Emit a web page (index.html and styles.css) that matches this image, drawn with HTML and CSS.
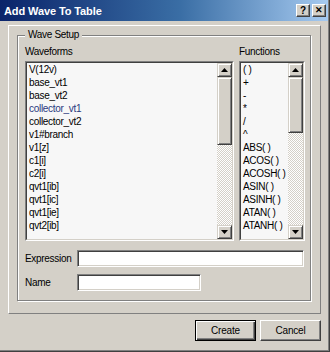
FILE: index.html
```html
<!DOCTYPE html>
<html>
<head>
<meta charset="utf-8">
<link rel="stylesheet" href="styles.css">
</head>
<body>
<div class="window">
  <div class="titlebar">
    <span class="title">Add Wave To Table</span>
    <div class="tbtns"><span class="tbtn">?</span><span class="tbtn x">✕</span></div>
  </div>
  <div class="panel">
    <div class="group">
      <span class="legend">Wave Setup</span>
      <div class="lists">
        <div class="lbl">Waveforms</div>
        <div class="lbl">Functions</div>
        <div class="listbox">
          <div class="lb-inner">
            <ul class="items">
              <li>V(12v)</li>
              <li>base_vt1</li>
              <li>base_vt2</li>
              <li class="sel">collector_vt1</li>
              <li>collector_vt2</li>
              <li>v1#branch</li>
              <li>v1[z]</li>
              <li>c1[i]</li>
              <li>c2[i]</li>
              <li>qvt1[ib]</li>
              <li>qvt1[ic]</li>
              <li>qvt1[ie]</li>
              <li>qvt2[ib]</li>
            </ul>
            <div class="sb">
              <div class="arrow"><svg width="7" height="4" viewBox="0 0 7 4"><polygon points="0,4 7,4 3.5,0"/></svg></div>
              <div class="track"><div class="thumb wave-thumb"></div></div>
              <div class="arrow"><svg width="7" height="4" viewBox="0 0 7 4"><polygon points="0,0 7,0 3.5,4"/></svg></div>
            </div>
          </div>
        </div>
        <div class="listbox">
          <div class="lb-inner">
            <ul class="items">
              <li>( )</li>
              <li>+</li>
              <li>-</li>
              <li>*</li>
              <li>/</li>
              <li>^</li>
              <li>ABS( )</li>
              <li>ACOS( )</li>
              <li>ACOSH( )</li>
              <li>ASIN( )</li>
              <li>ASINH( )</li>
              <li>ATAN( )</li>
              <li>ATANH( )</li>
            </ul>
            <div class="sb">
              <div class="arrow"><svg width="7" height="4" viewBox="0 0 7 4"><polygon points="0,4 7,4 3.5,0"/></svg></div>
              <div class="track"><div class="thumb func-thumb"></div></div>
              <div class="arrow"><svg width="7" height="4" viewBox="0 0 7 4"><polygon points="0,0 7,0 3.5,4"/></svg></div>
            </div>
          </div>
        </div>
      </div>
      <div class="field first"><span class="flabel">Expression</span><div class="input wide"></div></div>
      <div class="field second"><span class="flabel">Name</span><div class="input narrow"></div></div>
    </div>
  </div>
  <div class="footer">
    <button class="btn default">Create</button>
    <button class="btn">Cancel</button>
  </div>
</div>
</body>
</html>
```
FILE: styles.css
```css
html, body {
  margin: 0;
  padding: 0;
}
body {
  width: 330px;
  height: 352px;
  overflow: hidden;
  background: #d4d0c8;
  font-family: "Liberation Sans", Arial, sans-serif;
  font-size: 10px;
  letter-spacing: -0.3px;
  color: #000;
}
.window {
  box-sizing: border-box;
  width: 330px;
  height: 352px;
  border-right: 1px solid #404040;
  border-bottom: 1px solid #404040;
  box-shadow: inset -1px -1px #808080;
  display: flex;
  flex-direction: column;
}
.titlebar {
  box-sizing: border-box;
  height: 21px;
  margin-right: 1px;
  padding: 0 2px 0 4px;
  background: linear-gradient(to right, #0a246a, #3a6ea5 55%, #a6caf0);
  display: flex;
  align-items: center;
  justify-content: space-between;
}
.title {
  color: #fff;
  font-weight: bold;
  font-size: 11px;
  letter-spacing: -0.1px;
}
.tbtns {
  display: flex;
  gap: 2px;
}
.tbtn {
  box-sizing: border-box;
  width: 14px;
  height: 13px;
  background: #d4d0c8;
  border: 1px solid;
  border-color: #fff #404040 #404040 #fff;
  box-shadow: inset -1px -1px #808080;
  display: flex;
  align-items: center;
  justify-content: center;
  font-weight: bold;
  font-size: 10px;
  letter-spacing: 0;
  line-height: 1;
}
.tbtn.x {
  font-size: 9px;
}
.panel {
  box-sizing: border-box;
  width: 313px;
  height: 289px;
  margin: 4px 0 0 8px;
  padding: 9px 0 0 8px;
  border: 1px solid;
  border-color: #fff #808080 #808080 #fff;
}
.group {
  position: relative;
  box-sizing: border-box;
  width: 294px;
  padding: 10px 5px 9px 7px;
  border: 1px solid #808080;
  box-shadow: inset 1px 1px #fff, 1px 1px #fff;
}
.legend {
  position: absolute;
  top: -7px;
  left: 7px;
  padding: 0 3px;
  line-height: 12px;
  background: #d4d0c8;
}
.lists {
  display: grid;
  grid-template-columns: 209px 66px;
  grid-template-rows: 12px 180px;
  column-gap: 5px;
  row-gap: 3px;
}
.lbl {
  line-height: 12px;
}
.listbox {
  box-sizing: border-box;
  border: 1px solid;
  border-color: #808080 #fff #fff #808080;
  display: flex;
}
.lb-inner {
  flex: 1;
  display: flex;
  border: 1px solid;
  border-color: #404040 #d4d0c8 #d4d0c8 #404040;
  background: #f7f7f7;
}
.items {
  flex: 1;
  list-style: none;
  margin: 0;
  padding: 0 0 0 2px;
  line-height: 13px;
  overflow: hidden;
  white-space: nowrap;
}
.items .sel {
  color: #2b3a80;
}
.sb {
  width: 15px;
  display: flex;
  flex-direction: column;
}
.arrow, .thumb {
  box-sizing: border-box;
  background: #d4d0c8;
  border: 1px solid;
  border-color: #d4d0c8 #404040 #404040 #d4d0c8;
  box-shadow: inset 1px 1px #fff, inset -1px -1px #808080;
}
.arrow {
  height: 14px;
  display: flex;
  align-items: center;
  justify-content: center;
}
.arrow svg {
  display: block;
}
.track {
  flex: 1;
  background: repeating-conic-gradient(#d4d0c8 0 25%, #fff 0 50%) 0 0 / 2px 2px;
}
.wave-thumb {
  height: 68px;
}
.func-thumb {
  height: 56px;
}
.field {
  display: flex;
  align-items: center;
}
.field.first {
  margin-top: 9px;
}
.field.second {
  margin-top: 7px;
}
.flabel {
  width: 52px;
}
.input {
  box-sizing: border-box;
  height: 17px;
  background: #fff;
  border: 1px solid;
  border-color: #808080 #fff #fff #808080;
  box-shadow: inset 1px 1px #404040, inset -1px -1px #d4d0c8;
}
.input.wide {
  width: 227px;
}
.input.narrow {
  width: 124px;
}
.footer {
  display: flex;
  justify-content: flex-end;
  gap: 4px;
  margin-top: 6px;
  padding-right: 8px;
}
.btn {
  box-sizing: border-box;
  width: 61px;
  height: 21px;
  padding: 0;
  margin: 0;
  background: #d4d0c8;
  font-family: "Liberation Sans", Arial, sans-serif;
  font-size: 10px;
  letter-spacing: -0.2px;
  color: #000;
  border: 1px solid;
  border-color: #fff #404040 #404040 #fff;
  box-shadow: inset -1px -1px #808080;
}
.btn.default {
  border-color: #000;
  box-shadow: inset 1px 1px #fff, inset -1px -1px #404040, inset -2px -2px #808080;
}
```
